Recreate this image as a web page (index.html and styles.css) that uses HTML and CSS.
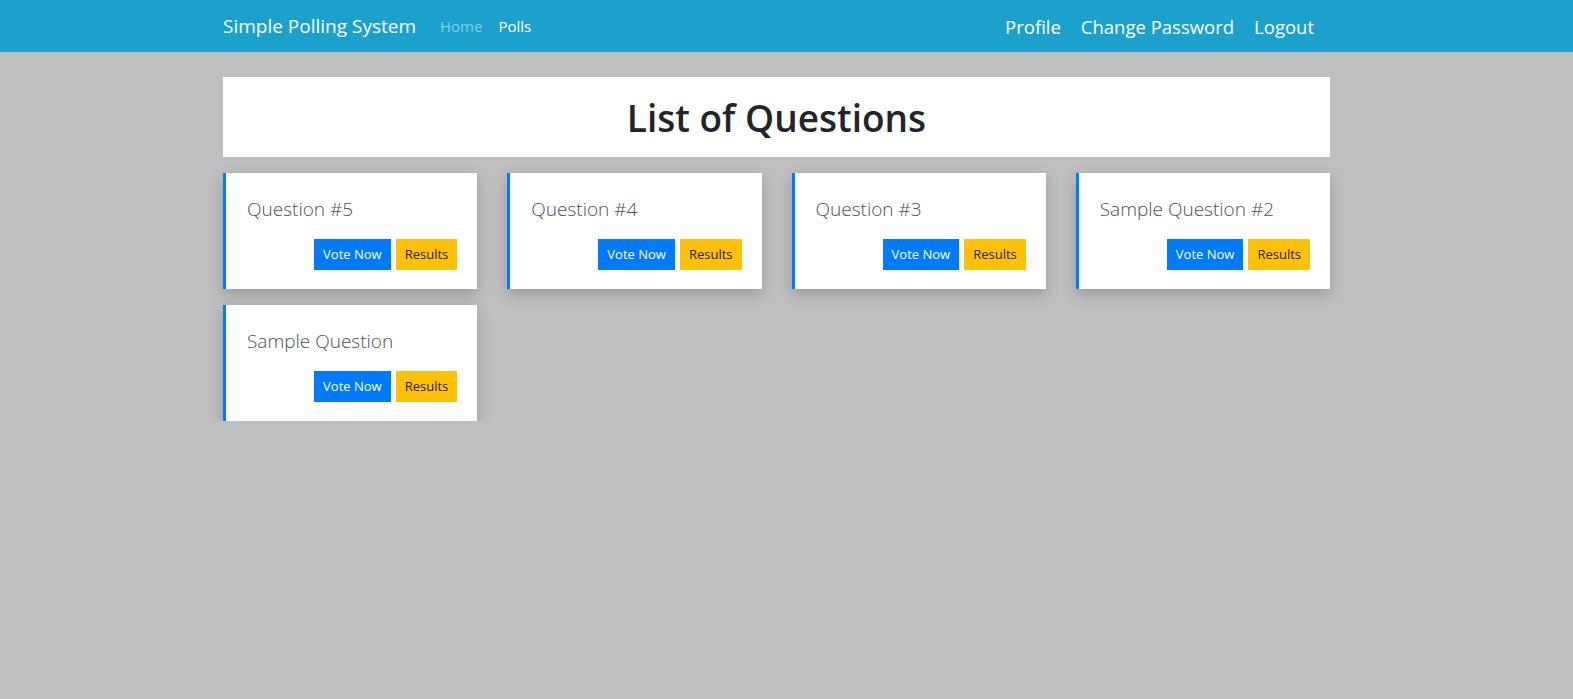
FILE: index.html
```html
<!DOCTYPE html>
<html lang="en">
<head>
    <meta charset="UTF-8">
    <meta name="viewport" content="width=device-width, initial-scale=1.0">
    <title>Simple Polling System</title>
    <link rel="stylesheet" href="styles.css">
</head>
<body>
    <nav class="navbar">
        <div class="container nav-inner">
            <a class="brand" href="#">Simple Polling System</a>
            <ul class="nav-left">
                <li><a class="muted" href="#">Home</a></li>
                <li><a href="#">Polls</a></li>
            </ul>
            <ul class="nav-right">
                <li><a href="#">Profile</a></li>
                <li><a href="#">Change Password</a></li>
                <li><a href="#">Logout</a></li>
            </ul>
        </div>
    </nav>

    <main class="container">
        <div class="page-title">
            <h1>List of Questions</h1>
        </div>

        <div class="questions">
            <div class="question">
                <h5>Question #5</h5>
                <div class="actions">
                    <a class="btn btn-primary" href="#">Vote Now</a>
                    <a class="btn btn-warning" href="#">Results</a>
                </div>
            </div>
            <div class="question">
                <h5>Question #4</h5>
                <div class="actions">
                    <a class="btn btn-primary" href="#">Vote Now</a>
                    <a class="btn btn-warning" href="#">Results</a>
                </div>
            </div>
            <div class="question">
                <h5>Question #3</h5>
                <div class="actions">
                    <a class="btn btn-primary" href="#">Vote Now</a>
                    <a class="btn btn-warning" href="#">Results</a>
                </div>
            </div>
            <div class="question">
                <h5>Sample Question #2</h5>
                <div class="actions">
                    <a class="btn btn-primary" href="#">Vote Now</a>
                    <a class="btn btn-warning" href="#">Results</a>
                </div>
            </div>
            <div class="question">
                <h5>Sample Question</h5>
                <div class="actions">
                    <a class="btn btn-primary" href="#">Vote Now</a>
                    <a class="btn btn-warning" href="#">Results</a>
                </div>
            </div>
        </div>
    </main>
</body>
</html>
```

FILE: styles.css
```css
body { margin: 0; background: #bfbfbf; font-family: "Open Sans", "Noto Sans", sans-serif; color: #212529; }
a { text-decoration: none; color: inherit; }
ul { list-style: none; margin: 0; padding: 0; }

.container { width: 1107px; margin-left: 223px; }

.navbar { background: #1ca1cd; height: 52px; }
.nav-inner { display: flex; align-items: center; height: 100%; }
.brand { color: #fff; font-size: 19px; margin-right: 16px; }
.nav-left { display: flex; }
.nav-left a { display: block; padding: 0 8px; color: #fff; font-size: 15px; }
.nav-left a.muted { color: #7fd0e6; }
.nav-right { display: flex; margin-left: auto; padding-right: 16px; gap: 20px; }
.nav-right a { color: #fff; font-size: 18.5px; }

.page-title { background: #fff; margin-top: 25px; height: 80px; display: flex; align-items: center; justify-content: center; }
.page-title h1 { margin: 0; font-size: 37px; font-weight: 600; }

.questions { display: grid; grid-template-columns: repeat(4, 1fr); column-gap: 30px; row-gap: 16px; margin-top: 16px; }
.question { background: #fff; border-left: 3px solid #007bff; height: 116px; box-sizing: border-box; padding: 24px 20px 0 21px; box-shadow: 0 5px 14px rgba(0, 0, 0, 0.2); }
.question h5 { margin: 0; font-size: 19px; font-weight: 300; color: #495057; line-height: 24px; }
.actions { display: flex; justify-content: flex-end; gap: 5px; margin-top: 18px; }
.btn { display: block; height: 31px; line-height: 31px; padding: 0 9px; font-size: 13px; }
.btn-primary { background: #007bff; color: #fff; }
.btn-warning { background: #ffc107; color: #212529; }
```
